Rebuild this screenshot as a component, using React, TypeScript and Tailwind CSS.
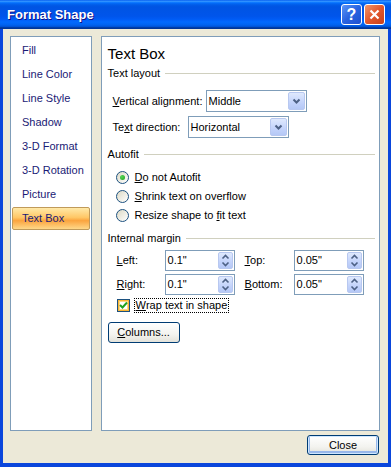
import React from "react";

const U = ({ c }: { c: string }) => <span className="underline underline-offset-[1px]">{c}</span>;

function Chevron() {
  return (
    <svg width="9" height="6" viewBox="0 0 9 6">
      <path d="M1.5 1.5 L4.5 4.5 L7.5 1.5" fill="none" stroke="#4d6185" strokeWidth="2" />
    </svg>
  );
}

function Select({ value, w }: { value: string; w: number }) {
  return (
    <div
      className={`${w === 101 ? "w-[101px]" : "w-[101px]"} h-[22px] border border-[#7f9db9] bg-white flex items-center pl-[2px] pr-[1px]`}
    >
      <span className="flex-1">{value}</span>
      <div className="w-[17px] h-[18px] rounded-[2px] border border-[#b8c8f0] bg-[linear-gradient(#dfe9fd,#c3d3fb_60%,#b5c8f6)] flex items-center justify-center">
        <Chevron />
      </div>
    </div>
  );
}

function Spin({ value }: { value: string }) {
  return (
    <div className="w-[70px] h-[21px] border border-[#7f9db9] bg-white flex items-center pl-[2px] pr-[1px]">
      <span className="flex-1">{value}</span>
      <div className="w-[15px] h-[17px] rounded-[2px] border border-[#b8c8f0] bg-[linear-gradient(#dfe9fd,#c3d3fb_60%,#b5c8f6)] flex items-center justify-center">
        <svg width="9" height="13" viewBox="0 0 9 13">
          <path d="M1.5 4.5 L4.5 1.5 L7.5 4.5" fill="none" stroke="#4d6185" strokeWidth="1.6" />
          <path d="M1.5 8.5 L4.5 11.5 L7.5 8.5" fill="none" stroke="#4d6185" strokeWidth="1.6" />
        </svg>
      </div>
    </div>
  );
}

function Section({ label, lineMl }: { label: string; lineMl: string }) {
  return (
    <div className="flex items-center h-[16px]">
      <span>{label}</span>
      <div className={`flex-1 h-px bg-[#d0d0bf] ${lineMl}`} />
    </div>
  );
}

function Radio({ checked, children }: { checked?: boolean; children: React.ReactNode }) {
  return (
    <div className="flex items-center h-[19px]">
      <div className="w-[13px] h-[13px] rounded-full border border-[#1c5180] bg-[linear-gradient(135deg,#dcd9c5,#ffffff)] flex items-center justify-center">
        {checked && <div className="w-[5px] h-[5px] rounded-full bg-[radial-gradient(circle_at_35%_35%,#55d655,#21a121)]" />}
      </div>
      <span className="ml-[6px]">{children}</span>
    </div>
  );
}

const navItems = ["Fill", "Line Color", "Line Style", "Shadow", "3-D Format", "3-D Rotation", "Picture", "Text Box"];

export default function App() {
  return (
    <div className="w-[391px] h-[467px] flex flex-col bg-[#0a46dc] font-['Liberation_Sans',Arial,sans-serif] text-[11px] text-black">
      {/* Title bar */}
      <div className="h-[29px] flex items-center pl-[7px] pr-[6px] bg-[linear-gradient(#0058ee_0%,#3593ff_4%,#288eff_6%,#127dff_8%,#036ffc_10%,#0262ee_14%,#0057e5_20%,#0054e3_24%,#0055eb_56%,#005bf5_66%,#026afe_76%,#0062ef_86%,#0052d6_92%,#0040ab_94%,#003092_100%)]">
        <span className="flex-1 text-white font-bold text-[13px] [text-shadow:1px_1px_#0f1089]">Format Shape</span>
        <div className="flex gap-[2px]">
          <div className="w-[21px] h-[21px] rounded-[3px] border border-white bg-[linear-gradient(135deg,#5b95f7,#2a63e0_50%,#1d4fd0)] flex items-center justify-center text-white font-bold text-[16px] leading-none">
            ?
          </div>
          <div className="w-[21px] h-[21px] rounded-[3px] border border-white bg-[linear-gradient(135deg,#f0966a,#e2572c_50%,#c8401a)] flex items-center justify-center">
            <svg width="11" height="11" viewBox="0 0 11 11">
              <path d="M1.5 1.5 L9.5 9.5 M9.5 1.5 L1.5 9.5" stroke="white" strokeWidth="2.2" />
            </svg>
          </div>
        </div>
      </div>

      {/* Body */}
      <div className="flex-1 mx-[3px] mb-[4px] bg-[#ece9d8] flex flex-col pt-[7px] pl-[6px] pr-[7px] border-l border-r border-b border-[#0a3cc8]/0">
        <div className="flex h-[395px] gap-[9px]">
          {/* Left nav */}
          <div className="w-[82px] border border-[#7f9db9] bg-white pt-px">
            {navItems.map((n) =>
              n === "Text Box" ? (
                <div key={n} className="h-[24px] mx-px flex items-center">
                  <div className="w-full h-[23px] flex items-center pl-[9px] rounded-[2px] border border-[#c09a5a] bg-[linear-gradient(#ffe9a8,#ffc766_45%,#fba43e_60%,#ffd889)] text-[#1a1a75]">
                    {n}
                  </div>
                </div>
              ) : (
                <div key={n} className="h-[24px] flex items-center pl-[11px] text-[#1a1a75]">
                  {n}
                </div>
              )
            )}
          </div>

          {/* Right panel */}
          <div className="w-[281px] border border-[#7f9db9] bg-white pl-[6px] pr-[4px] flex flex-col">
            <div className="mt-[7px] h-[20px] leading-[20px] text-[15px]">Text Box</div>
            <div className="mt-px">
              <Section label="Text layout" lineMl="ml-[5px]" />
            </div>
            <div className="mt-[9px] pl-[5px] flex items-center">
              <span className="w-[93px]">
                <U c="V" />ertical alignment:
              </span>
              <Select value="Middle" w={101} />
            </div>
            <div className="mt-[4px] pl-[5px] flex items-center">
              <span className="w-[75px]">
                Te<U c="x" />t direction:
              </span>
              <Select value="Horizontal" w={101} />
            </div>
            <div className="mt-[8px]">
              <Section label="Autofit" lineMl="ml-[5px]" />
            </div>
            <div className="mt-[6px] pl-[8px] flex flex-col">
              <Radio checked>
                <U c="D" />o not Autofit
              </Radio>
              <Radio>
                <U c="S" />hrink text on overflow
              </Radio>
              <Radio>
                Resize shape to <U c="f" />it text
              </Radio>
            </div>
            <div className="mt-[5px]">
              <Section label="Internal margin" lineMl="ml-[5px]" />
            </div>
            <div className="mt-[4px] pl-[9px] flex items-center h-[20px]">
              <span className="w-[48px]">
                <U c="L" />eft:
              </span>
              <Spin value={'0.1"'} />
              <span className="w-[49px] ml-[10px]">
                <U c="T" />op:
              </span>
              <Spin value={'0.05"'} />
            </div>
            <div className="mt-[4px] pl-[9px] flex items-center h-[20px]">
              <span className="w-[48px]">
                <U c="R" />ight:
              </span>
              <Spin value={'0.1"'} />
              <span className="w-[49px] ml-[10px]">
                <U c="B" />ottom:
              </span>
              <Spin value={'0.05"'} />
            </div>
            <div className="mt-[4px] pl-[9px] flex items-center h-[15px]">
              <div className="w-[13px] h-[13px] border border-[#1c5180] bg-white shadow-[inset_0_0_0_1px_#f8b636,inset_0_0_0_2px_#fdd889] flex items-center justify-center">
                <svg width="9" height="9" viewBox="0 0 9 9">
                  <path d="M1 4 L3.5 6.5 L8 1.5" fill="none" stroke="#21a121" strokeWidth="2" />
                </svg>
              </div>
              <span className="ml-[4px] h-[15px] flex items-center px-px border border-dotted border-black">
                <U c="W" />rap text in shape
              </span>
            </div>
            <div className="mt-[9px]">
              <div className="w-[72px] h-[21px] rounded-[3px] border border-[#003c74] bg-[linear-gradient(#ffffff,#f3f3ef_60%,#e3e2da)] flex items-center justify-center">
                <U c="C" />olumns...
              </div>
            </div>
          </div>
        </div>

        <div className="flex justify-end mt-[4px] mr-px">
          <div className="w-[72px] h-[20px] rounded-[3px] border border-[#003c74] bg-[linear-gradient(#ffffff,#f3f3ef_60%,#e3e2da)] shadow-[inset_0_0_0_1px_#cee7ff,inset_0_-1px_0_2px_#98b8ea] flex items-center justify-center">
            Close
          </div>
        </div>
      </div>
    </div>
  );
}
